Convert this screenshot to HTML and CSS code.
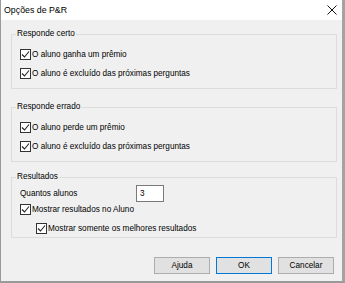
FILE: index.html
```html
<!DOCTYPE html>
<html lang="pt">
<head>
    <meta charset="UTF-8">
    <title>Opções de P&amp;R</title>
    <link rel="stylesheet" href="styles.css">
</head>
<body>

<div class="dialog">
    <div class="titlebar">
        <span class="title">Opções de P&amp;R</span>
        <svg class="close" width="10" height="10" viewBox="0 0 10 10">
            <path d="M0.5 0.5 L9.5 9.5 M9.5 0.5 L0.5 9.5" stroke="#111" stroke-width="1" fill="none"/>
        </svg>
    </div>

    <div class="content">
        <fieldset class="group">
            <legend>Responde certo</legend>
            <label class="option">
                <span class="box"><svg width="9" height="9" viewBox="0 0 9 9"><path d="M1 4.5 L3.5 7 L8 1.5" stroke="#222" stroke-width="1.1" fill="none"/></svg></span>
                O aluno ganha um prêmio
            </label>
            <label class="option">
                <span class="box"><svg width="9" height="9" viewBox="0 0 9 9"><path d="M1 4.5 L3.5 7 L8 1.5" stroke="#222" stroke-width="1.1" fill="none"/></svg></span>
                O aluno é excluído das próximas perguntas
            </label>
        </fieldset>

        <fieldset class="group">
            <legend>Responde errado</legend>
            <label class="option">
                <span class="box"><svg width="9" height="9" viewBox="0 0 9 9"><path d="M1 4.5 L3.5 7 L8 1.5" stroke="#222" stroke-width="1.1" fill="none"/></svg></span>
                O aluno perde um prêmio
            </label>
            <label class="option">
                <span class="box"><svg width="9" height="9" viewBox="0 0 9 9"><path d="M1 4.5 L3.5 7 L8 1.5" stroke="#222" stroke-width="1.1" fill="none"/></svg></span>
                O aluno é excluído das próximas perguntas
            </label>
        </fieldset>

        <fieldset class="group results">
            <legend>Resultados</legend>
            <div class="field">
                <span class="field-label">Quantos alunos</span>
                <span class="textbox">3</span>
            </div>
            <label class="option">
                <span class="box"><svg width="9" height="9" viewBox="0 0 9 9"><path d="M1 4.5 L3.5 7 L8 1.5" stroke="#222" stroke-width="1.1" fill="none"/></svg></span>
                Mostrar resultados no Aluno
            </label>
            <label class="option nested">
                <span class="box"><svg width="9" height="9" viewBox="0 0 9 9"><path d="M1 4.5 L3.5 7 L8 1.5" stroke="#222" stroke-width="1.1" fill="none"/></svg></span>
                Mostrar somente os melhores resultados
            </label>
        </fieldset>

        <div class="buttons">
            <button>Ajuda</button>
            <button class="default">OK</button>
            <button>Cancelar</button>
        </div>
    </div>
</div>

</body>
</html>
```

FILE: styles.css
```css
body {
    margin: 0;
    font-family: "Liberation Sans", Arial, sans-serif;
    font-size: 8.2px;
    color: #000;
}

.dialog {
    width: 345px;
    height: 283px;
    box-sizing: border-box;
    background-color: #f0f0f0;
    border-left: 1px solid #9a9a9a;
    border-right: 3px solid #a3a3a3;
    border-bottom: 2px solid #9a9a9a;
}

.titlebar {
    height: 20px;
    background-color: #fff;
    display: flex;
    align-items: center;
    justify-content: space-between;
    padding: 0 5px 0 3px;
}

.title {
    font-size: 8.8px;
}

.content {
    padding: 8px 5px 0 10px;
    display: flex;
    flex-direction: column;
}

.group {
    margin: 0;
    padding: 7px 8px 8px 8px;
    border: 1px solid #dcdcdc;
    display: flex;
    flex-direction: column;
    gap: 5px;
    min-inline-size: 0;
}

.group + .group {
    margin-top: 12px;
}

.group.results {
    margin-top: 9px;
    padding-top: 2px;
    padding-bottom: 2px;
    gap: 0;
}

legend {
    padding: 0 1px;
    margin-left: -4px;
    line-height: 12px;
}

.option {
    display: flex;
    align-items: center;
    gap: 1px;
    height: 14px;
}

.box {
    width: 11px;
    height: 11px;
    box-sizing: border-box;
    border: 1px solid #333;
    background-color: #fff;
    display: flex;
    align-items: center;
    justify-content: center;
}

.results .option {
    margin-top: 0;
}

.results .nested {
    margin-top: 5px;
    padding-left: 16px;
}

.field {
    display: flex;
    align-items: center;
    height: 17px;
}

.field-label {
    width: 116px;
}

.textbox {
    width: 28px;
    height: 17px;
    box-sizing: border-box;
    border: 1px solid #7a7a7a;
    background-color: #fff;
    padding-left: 3px;
    line-height: 15px;
}

.buttons {
    display: flex;
    justify-content: flex-end;
    gap: 6px;
    margin-top: 19px;
    padding-right: 3px;
}

button {
    width: 56px;
    height: 17px;
    padding: 0;
    font-family: inherit;
    font-size: 8.2px;
    background-color: #e1e1e1;
    border: 1px solid #adadad;
    color: #000;
}

button.default {
    border: 1px solid #0078d7;
}
```
